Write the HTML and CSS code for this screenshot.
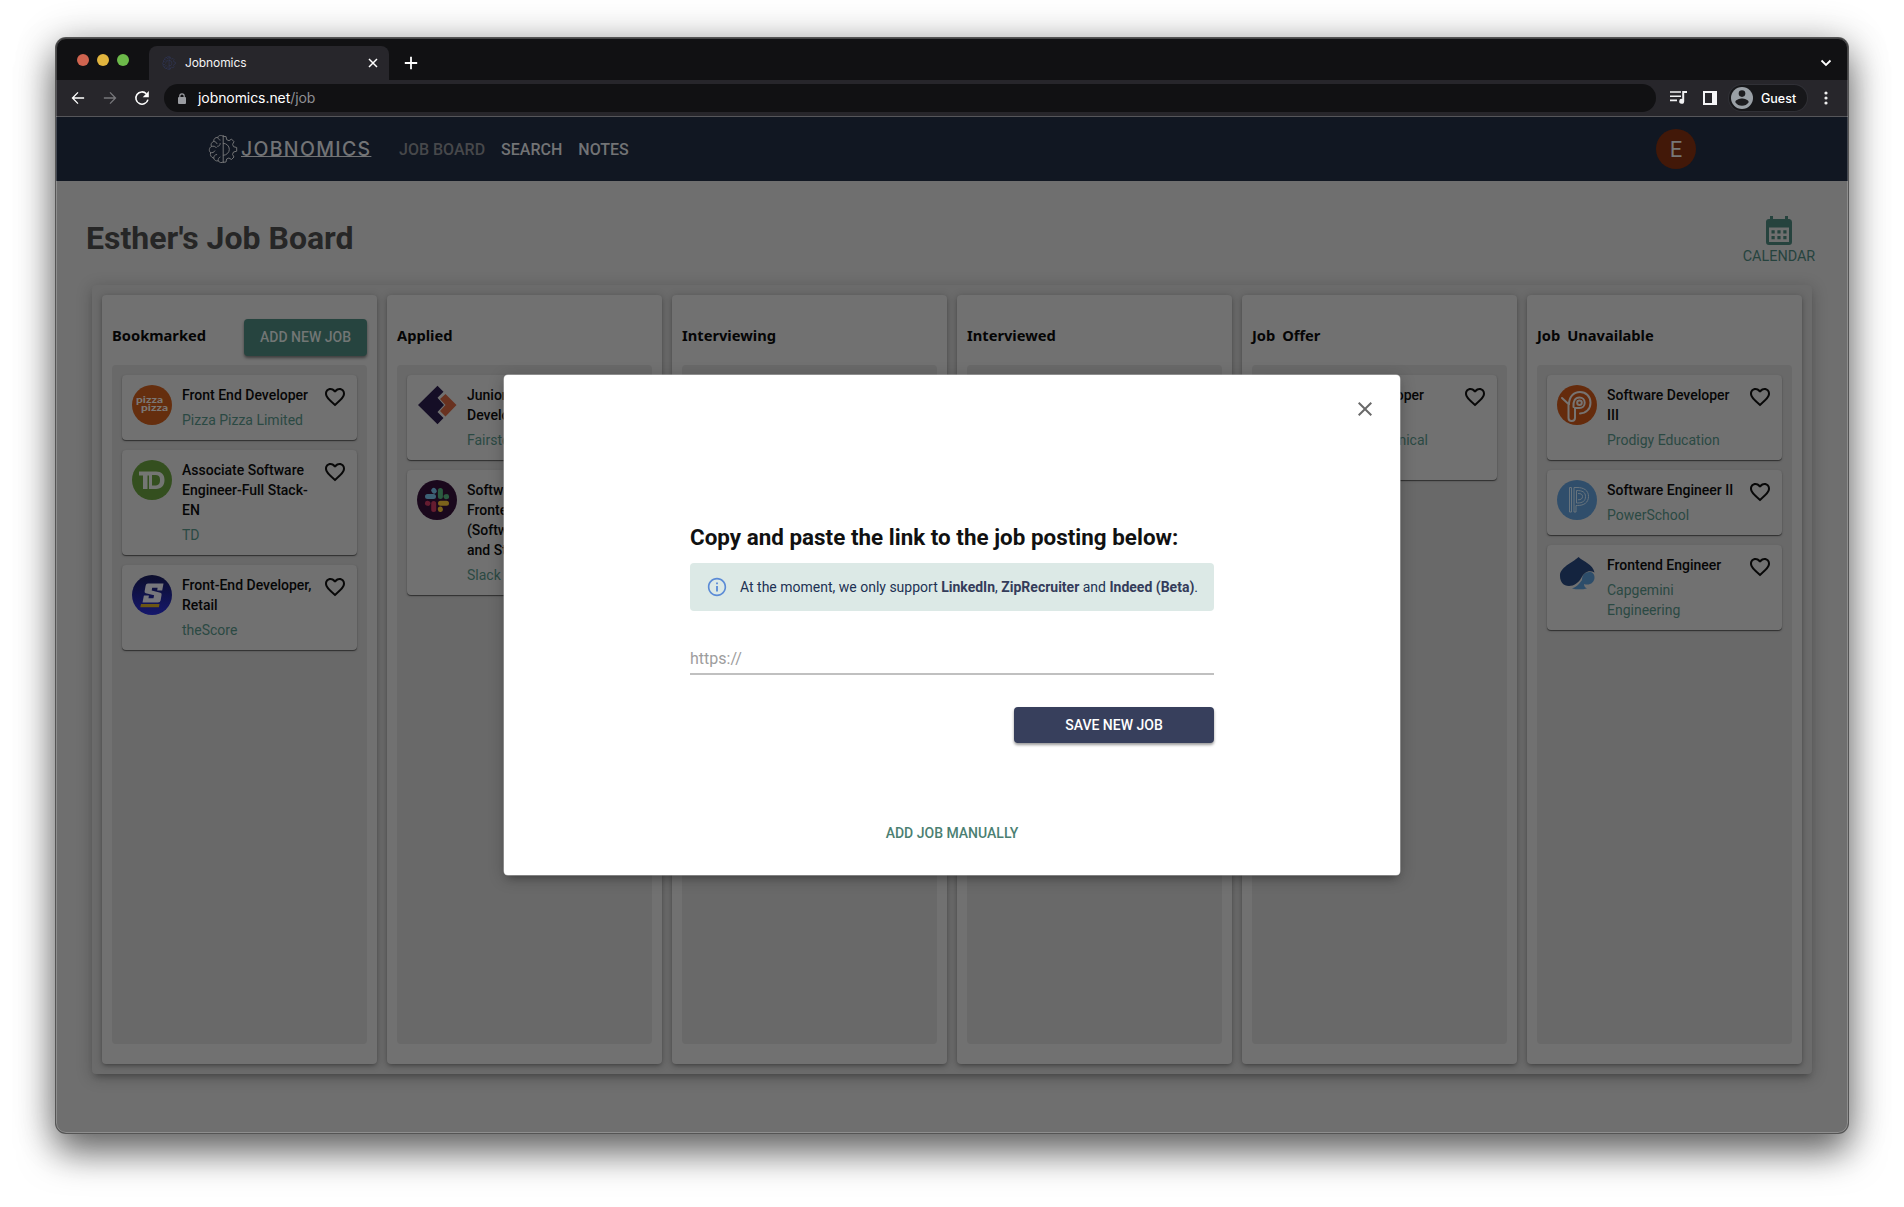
FILE: index.html
```html
<!DOCTYPE html>
<html lang="en">
<head>
<meta charset="utf-8">
<title>Jobnomics</title>
<link rel="stylesheet" href="styles.css">
</head>
<body>
<svg width="0" height="0" class="defs">
  <symbol id="heart" viewBox="0 0 24 24"><path d="M16.5 3c-1.74 0-3.41.81-4.5 2.09C10.91 3.81 9.24 3 7.5 3 4.42 3 2 5.42 2 8.5c0 3.78 3.4 6.86 8.55 11.54L12 21.35l1.45-1.32C18.6 15.36 22 12.28 22 8.5 22 5.42 19.58 3 16.5 3zm-4.4 15.55-.1.1-.1-.1C7.14 14.24 4 11.39 4 8.5 4 6.5 5.5 5 7.5 5c1.54 0 3.04.99 3.57 2.36h1.87C13.46 5.99 14.96 5 16.5 5c2 0 3.5 1.5 3.5 3.5 0 2.89-3.14 5.74-7.9 10.05z"/></symbol>
  <symbol id="brain" viewBox="0 0 30 30"><g fill="none" stroke="currentColor" stroke-width="1" stroke-linejoin="round" stroke-linecap="round"><path d="M15.2 1.5v27M15 2.2c-2-1.500-4.600-.8-5.200 1.200-2.600-.2-4.400 1.600-4 4C3.500 8.200 2.500 10.400 3.400 12.400 1 13.800.6 17 2.600 18.700 1.800 21.200 3.200 23.600 5.600 24c.6 2.300 2.600 3.400 4.600 2.800 1.200 2 3.600 2.400 4.900 1.200"/><path d="M6 7.500c1.500.1 2.600.9 3 2.200M9.800 3.500c.2 1.300 1 2.200 2.300 2.500M12.200 9.500c0 1.500-.8 2.700-2.600 2.800M3.500 12.500c2-.8 3.900-.3 4.800 1.200M2.700 18.600c1.700.5 3.300-.1 4.100-1.700M5.700 24c0-2 1.100-3.300 3-3.500M10.200 26.600c-.2-1.600.4-2.800 1.800-3.500"/><path d="M15.300 9.300a6 6 0 0 1 0 12M15.300 2.400l2.800.2.500 3 2.400 1.100 2.500-1.600 2.500 2.600-1.400 2.600.9 2.400 3.200.8v3.700l-3.200.8-1 2.400 1.500 2.600-2.500 2.500-2.600-1.500-2.300 1-.6 3-2.600.3"/></g></symbol>
</svg>
<div class="window">
  <div class="tabstrip">
    <div class="lights"><i class="red"></i><i class="amber"></i><i class="green"></i></div>
    <div class="tab">
      <svg class="favicon" width="14" height="14"><use href="#brain"/></svg>
      <span class="tab-title">Jobnomics</span>
      <svg width="10" height="10" viewBox="0 0 10 10" stroke="#fff" stroke-width="1.500"><path d="M1 1l8 8M9 1L1 9"/></svg>
    </div>
    <svg class="plus" width="14" height="14" viewBox="0 0 14 14" stroke="#fff" stroke-width="1.800"><path d="M7 .8v12.400M.8 7h12.400"/></svg>
    <svg class="chevron" width="12" height="8" viewBox="0 0 12 8" fill="none" stroke="#fff" stroke-width="1.800"><path d="M1.500 1.500L6 6l4.500-4.500"/></svg>
  </div>
  <div class="toolbar">
    <svg class="tool" viewBox="0 0 16 16" fill="none" stroke="#fff" stroke-width="1.500"><path d="M15 8H2M8 1.600L1.700 8 8 14.400"/></svg>
    <svg class="tool" viewBox="0 0 16 16" fill="none" stroke="#77777b" stroke-width="1.500"><path d="M1 8h13M8 1.600L14.300 8 8 14.400"/></svg>
    <svg class="tool" viewBox="0 0 16 16" fill="none" stroke="#fff" stroke-width="1.800"><path d="M14.800 9.800A7 7 0 1 1 13 3.100"/><path d="M15.800 0v7H8.800z" fill="#fff" stroke="none"/></svg>
    <div class="omnibox">
      <svg width="8" height="11" viewBox="0 0 8 11"><rect y="4" width="8" height="7" rx="1" fill="#9a9ca1"/><path d="M1.800 4.500V3a2.200 2.200 0 0 1 4.400 0v1.500" fill="none" stroke="#9a9ca1" stroke-width="1.200"/></svg>
      <span class="url">jobnomics.net<span>/job</span></span>
    </div>
    <svg class="media" width="17" height="14" viewBox="0 0 17 14"><path d="M0 1h11M0 5.200h11M0 9.400h7" stroke="#f1f1f3" stroke-width="1.600"/><path d="M12.200 0H17v2h-2.800v8.300a2.500 2.500 0 1 1-2-2.400z" fill="#f1f1f3"/></svg>
    <svg class="panel" width="14" height="14" viewBox="0 0 14 14"><path d="M0 0h14v14H0zM2 2v10h7V2z" fill="#f5f5f7" fill-rule="evenodd"/></svg>
    <div class="guest">
      <svg width="22" height="22" viewBox="0 0 22 22"><circle cx="11" cy="11" r="11" fill="#9aa0a6"/><circle cx="11" cy="6.600" r="3.300" fill="#1d1d20"/><path d="M4.300 15.200c0-2.400 4.500-3.600 6.700-3.600s6.700 1.200 6.700 3.600c-1.600 2.300-4 3.600-6.700 3.600s-5.100-1.300-6.700-3.600z" fill="#1d1d20"/></svg>
      <span>Guest</span>
    </div>
    <svg class="dots" width="4" height="14" viewBox="0 0 4 14" fill="#eee"><circle cx="2" cy="2" r="1.600"/><circle cx="2" cy="7" r="1.600"/><circle cx="2" cy="12" r="1.600"/></svg>
  </div>

  <nav class="nav">
    <svg class="brand-icon" width="30" height="30"><use href="#brain"/></svg>
    <span class="brand">JOBNOMICS</span>
    <a class="active">JOB BOARD</a><a>SEARCH</a><a>NOTES</a>
    <span class="avatar">E</span>
  </nav>

  <main class="page">
    <header class="head">
      <h1>Esther's Job Board</h1>
      <div class="calendar">
        <svg width="32" height="30" viewBox="0 0 32 30"><path fill-rule="evenodd" d="M7 0h3v3h12V0h3v3h1.500a3 3 0 0 1 2.500 3v20a3 3 0 0 1-3 3H6a3 3 0 0 1-3-3V6a3 3 0 0 1 3-3h1zM6 11.500V26h20V11.500z"/><path d="M8.500 14.200h3.200v3.200H8.500zM14.400 14.200h3.200v3.200h-3.200zM20.300 14.200h3.200v3.200h-3.200zM8.500 20h3.200v3.200H8.500zM14.400 20h3.200v3.200h-3.200zM20.300 20h3.200v3.200h-3.200z"/></svg>
        <span>CALENDAR</span>
      </div>
    </header>
    <section class="board">
      <div class="column">
        <div class="column-head"><h2>Bookmarked</h2><button class="add">ADD NEW JOB</button></div>
        <div class="list">
          <article class="card">
            <svg class="logo" viewBox="0 0 40 40"><circle cx="20" cy="20" r="20" fill="#652e0e"/><text class="pizza"><tspan x="4" y="17.500" textLength="27" lengthAdjust="spacingAndGlyphs">pizza</tspan><tspan x="9" y="25.500" textLength="27" lengthAdjust="spacingAndGlyphs">pizza</tspan></text></svg>
            <div class="info"><h3>Front End Developer</h3><p>Pizza Pizza Limited</p></div>
            <svg class="heart"><use href="#heart"/></svg>
          </article>
          <article class="card">
            <svg class="logo" viewBox="0 0 40 40"><circle cx="20" cy="20" r="20" fill="#344f1f"/><path fill="#747673" fill-rule="evenodd" d="M7 11.500h17c5.500 0 8.500 3 8.500 8.500s-3 9-8.500 9h-8.500V15.500H15V29h-4V15.500H7zM20 15v10.500h2.500c4 0 5.500-1.700 5.500-5.500s-1.500-5-5.500-5z"/><path d="M16.500 15.500V29" stroke="#344f1f"/></svg>
            <div class="info"><h3>Associate Software<br>Engineer-Full Stack-<br>EN</h3><p>TD</p></div>
            <svg class="heart"><use href="#heart"/></svg>
          </article>
          <article class="card">
            <svg class="logo" viewBox="0 0 40 40"><defs><linearGradient id="score" x2="0" y2="1"><stop stop-color="#0c0e2c"/><stop offset="1" stop-color="#15176c"/></linearGradient></defs><circle cx="20" cy="20" r="20" fill="url(#score)"/><path fill="#77777c" d="M16 8.500h15.500l-1.300 7h-5l.4-2.700h-5.400l-.5 2.700 8.700 2.200q1.500.5 1.200 2l-1 5.800q-.4 2-2.600 2H10.500l1.400-7h5l-.4 2.800h5l.6-3-8.300-2q-1.500-.4-1.200-2l1-5.600q.4-2.200 2.400-2.200z"/><path fill="#6c5614" d="M9 29h18.500l-.6 3.300H8.300z"/></svg>
            <div class="info"><h3>Front-End Developer,<br>Retail</h3><p>theScore</p></div>
            <svg class="heart"><use href="#heart"/></svg>
          </article>
        </div>
      </div>
      <div class="column">
        <div class="column-head"><h2>Applied</h2></div>
        <div class="list">
          <article class="card">
            <svg class="logo" viewBox="0 0 40 40"><path fill="#150e26" d="M20.500.8l6 6-6 6 6.500 7.200-6.500 7 6 6-6 6.200L1 20z"/><path fill="#693220" d="M28.500 9L39.500 20 28.500 31.500 23 26l5.500-6-5.500-6z"/></svg>
            <div class="info"><h3>Junior Frontend<br>Developer</h3><p>Fairstone</p></div>
            <svg class="heart"><use href="#heart"/></svg>
          </article>
          <article class="card">
            <svg class="logo" viewBox="0 0 40 40"><circle cx="20" cy="20" r="20" fill="#1a081c"/><g stroke-width="5" stroke-linecap="round"><path stroke="#3c6175" d="M10.500 16.600h6M16.700 10.400v0l.6.700"/><path stroke="#2b5a40" d="M23.400 10.500v6M29.600 16.600v0l-.6.100"/><path stroke="#7c621c" d="M29.500 23.300h-6M23.400 29.500v0l-.1-.6"/><path stroke="#651c30" d="M16.700 29.500v-6M10.400 23.300v0l.6.100"/></g></svg>
            <div class="info"><h3>Software Engineer,<br>Frontend<br>(Software Design<br>and Strategy)</h3><p>Slack</p></div>
            <svg class="heart"><use href="#heart"/></svg>
          </article>
        </div>
      </div>
      <div class="column"><div class="column-head"><h2>Interviewing</h2></div><div class="list"></div></div>
      <div class="column"><div class="column-head"><h2>Interviewed</h2></div><div class="list"></div></div>
      <div class="column">
        <div class="column-head"><h2>Job Offer</h2></div>
        <div class="list">
          <article class="card">
            <span class="logo"></span>
            <div class="info"><h3>React Developer<br>II</h3><p>Lumi Mechanical<br>Group</p></div>
            <svg class="heart"><use href="#heart"/></svg>
          </article>
        </div>
      </div>
      <div class="column">
        <div class="column-head"><h2>Job Unavailable</h2></div>
        <div class="list">
          <article class="card">
            <svg class="logo" viewBox="0 0 40 40"><circle cx="20" cy="20" r="20" fill="#652b0c"/><g fill="none" stroke="#777472" stroke-width="2" stroke-linecap="round" stroke-linejoin="round"><path d="M5 13l7 6.500M11.500 20v13q0 3 3.200 3t3.300-3v-9.500M12 19.500c0-7.500 4.500-12.500 11-12.500 6 0 10.500 4.500 10.500 10.700 0 6.300-4.500 10.700-10.500 10.700"/><path d="M16.500 22c-.5-6 1.500-9.500 6-9.500 3 0 5.200 2.200 5.200 5.200s-2.200 5.300-5.200 5.300H18"/><circle cx="22.500" cy="17.700" r="2.300"/></g></svg>
            <div class="info"><h3>Software Developer<br>III</h3><p>Prodigy Education</p></div>
            <svg class="heart"><use href="#heart"/></svg>
          </article>
          <article class="card">
            <svg class="logo" viewBox="0 0 40 40"><circle cx="20" cy="20" r="20" fill="#304e6b"/><path fill="none" stroke="#68747d" stroke-width="1" d="M12.500 7.500v24.500h2V7.500zM17 7.500h3c7 0 11.500 3 11.500 9s-4.500 9-11 9H19V32h-2zM19.500 10.500v12.500h1c5 0 8-2 8-6.400s-3-6.100-9-6.100zM21 13.500c3 0 4.500.8 4.500 3s-1.500 3.300-4.500 3.300"/></svg>
            <div class="info"><h3>Software Engineer II</h3><p>PowerSchool</p></div>
            <svg class="heart"><use href="#heart"/></svg>
          </article>
          <article class="card">
            <svg class="logo" viewBox="0 0 40 40"><path fill="#2d4d6a" d="M25 25c0-5 3-8 7.500-8 3 0 5 2 5 5.500 0 5-5 8.500-10.500 6.500 0 2 1 3.500 3 4.500-4 1-10 1.300-15 0 4-1.500 7-4 10-8.500z"/><path fill="#14243f" d="M21.500 2c5 4.500 14.500 7.500 16 15.500-5.500-3-10.500 0-13 5C21.500 28 17 31 12 31 6.500 31 3 27 3 21 3 12 14.500 8.500 21.500 2z"/></svg>
            <div class="info"><h3>Frontend Engineer</h3><p>Capgemini<br>Engineering</p></div>
            <svg class="heart"><use href="#heart"/></svg>
          </article>
        </div>
      </div>
    </section>
  </main>

  <div class="modal">
    <svg class="close" width="24" height="24" viewBox="0 0 24 24"><path d="M19 6.410 17.590 5 12 10.590 6.410 5 5 6.410 10.590 12 5 17.590 6.410 19 12 13.410 17.590 19 19 17.590 13.410 12z"/></svg>
    <div class="form">
      <h2>Copy and paste the link to the job posting below:</h2>
      <div class="alert">
        <svg width="22" height="22" viewBox="0 0 24 24"><path d="M11 7h2v2h-2zM11 11h2v6h-2zM12 2C6.480 2 2 6.480 2 12s4.480 10 10 10 10-4.480 10-10S17.520 2 12 2zm0 18.200c-4.500 0-8.200-3.700-8.200-8.200S7.500 3.800 12 3.800s8.200 3.700 8.200 8.200-3.700 8.200-8.200 8.200z"/></svg>
        <span>At the moment, we only support <b>LinkedIn</b>, <b>ZipRecruiter</b> and <b>Indeed (Beta)</b>.</span>
      </div>
      <div class="field">https://</div>
      <button class="save">SAVE NEW JOB</button>
    </div>
    <button class="manual">ADD JOB MANUALLY</button>
  </div>
</div>
</body>
</html>
```
FILE: styles.css
```css
* { box-sizing: border-box; }
body { margin: 0; height: 1207px; padding: 38px 56px 0; background: #fff; overflow: hidden; font-family: Roboto, "Liberation Sans", sans-serif; }
.defs { position: absolute; }
h1, h2, h3, p { margin: 0; }
svg { flex: none; display: block; }
button { border: 0; padding: 0; font: inherit; }

.window { position: relative; width: 1792px; height: 1095px; border-radius: 10px; overflow: hidden; background: #6f6f6f; display: flex; flex-direction: column; box-shadow: 0 0 0 1px #555, 0 20px 36px rgba(0,0,0,.5), 0 4px 40px rgba(0,0,0,.3); }
.window::after { content: ""; position: absolute; inset: 0; border-radius: 10px; border: 1px solid rgba(255,255,255,.22); pointer-events: none; }

.tabstrip { height: 42px; flex: none; background: #111113; display: flex; align-items: flex-start; padding-left: 21px; font-family: Inter, sans-serif; }
.lights { display: flex; gap: 8px; margin: 15.500px 20px 0 0; }
.lights i { width: 12px; height: 12px; border-radius: 50%; }
.red { background: #d0644f; } .amber { background: #e2b53e; } .green { background: #6dba4a; }
.tab { width: 240px; height: 34px; margin-top: 8px; background: #27262b; border-radius: 8px 8px 0 0; display: flex; align-items: center; padding: 0 11px 0 13px; color: #f4f4f5; font-size: 12px; }
.favicon { color: #363e68; margin-right: 9px; }
.tab-title { flex: 1; margin-top: -2px; letter-spacing: -.1px; }
.plus { margin: 18px 0 0 15px; }
.chevron { margin: 21px 16px 0 auto; }

.toolbar { height: 37px; flex: none; background: #27262b; border-bottom: 1px solid #56565a; display: flex; align-items: center; padding: 0 20px 0 15px; font-family: Inter, sans-serif; }
.tool { width: 14px; height: 14px; margin-right: 18px; overflow: visible; }
.omnibox { width: 1492px; height: 28px; margin-left: -3px; border-radius: 14px; background: #111113; display: flex; align-items: center; padding-left: 14px; gap: 12px; }
.url { color: #fff; font-size: 14px; letter-spacing: -.07px; margin-top: -1px; }
.url span { color: #8f8f93; }
.media { margin-left: 14px; }
.panel { margin-left: 16px; }
.guest { margin-left: 12px; width: 78px; height: 26px; border-radius: 13px; background: #17171a; display: flex; align-items: center; gap: 8px; padding-left: 2px; color: #fff; font-size: 12.500px; font-weight: 500; box-shadow: 0 0 0 1px #303036; }
.dots { margin-left: auto; }

.nav { height: 64px; flex: none; background: #111722; display: flex; align-items: center; padding-left: 152px; color: #727375; font-size: 16px; font-weight: 500; }
.brand { margin: 0 29px 0 3px; width: 129px; font: 500 19.500px/24px Inter, sans-serif; letter-spacing: 1.300px; text-decoration: underline; text-decoration-thickness: 1px; text-underline-offset: 0; text-decoration-skip-ink: none; white-space: nowrap; }
.brand-icon { color: #727375; }
.nav a { margin-right: 16px; }
.nav .active { color: #47484b; }
.avatar { width: 40px; height: 40px; margin: 0 152px 0 auto; border-radius: 50%; background: #421808; color: #777; display: grid; place-items: center; font-size: 22px; font-weight: 400; }

.page { padding: 35px 30px 0; }
.head { display: flex; justify-content: space-between; height: 69px; }
h1 { font-size: 32px; line-height: 44px; font-weight: 700; color: #262626; }
.calendar { display: flex; flex-direction: column; align-items: center; width: 80px; margin-right: -1px; color: #26433e; fill: #26433e; font-size: 14.400px; line-height: 22px; }
.board { margin: 0 6px; height: 789px; padding: 10px; display: grid; grid-template-columns: repeat(6, 275px); gap: 10px; border-radius: 4px; background: #6b6b6b; box-shadow: 0 5px 6px -3px rgba(0,0,0,.28), 0 3px 16px 1px rgba(0,0,0,.2); }
.column { padding: 10px 10px 20px; border-radius: 4px; background: #717171; display: flex; flex-direction: column; box-shadow: 0 2px 4px -1px rgba(0,0,0,.35), 0 1px 8px rgba(0,0,0,.18); }
.column-head { height: 60px; display: flex; justify-content: space-between; align-items: flex-start; }
.column-head h2 { margin-top: 19px; font: 700 14.700px/22px "Noto Sans", sans-serif; word-spacing: 3px; color: #050505; }
.add { margin-top: 14px; width: 123px; height: 36.500px; border-radius: 4px; background: #26443f; color: #727675; font-size: 14px; font-weight: 500; box-shadow: 0 2px 3px rgba(0,0,0,.45); }
.list { flex: 1; padding: 10px; display: flex; flex-direction: column; gap: 10px; border-radius: 4px; background: #696969; }
.card { padding: 10px; display: flex; border-radius: 4px; background: #717171; box-shadow: 0 1px 1px rgba(0,0,0,.5), 0 1px 3px rgba(0,0,0,.12); font-size: 14px; line-height: 20px; }
.logo { width: 40px; height: 40px; margin-right: 10px; flex: none; }
.info { flex: 1; white-space: nowrap; }
.info h3 { font-size: 14px; line-height: 20px; font-weight: 500; color: #060606; }
.info p { margin-top: 5px; color: #2b4943; }
.heart { width: 24px; height: 24px; fill: #080808; }
.pizza { font: 900 10px Lato, sans-serif; fill: #7b7774; }

.modal { position: absolute; left: 448px; top: 337px; width: 896px; height: 500px; border-radius: 4px; background: #fff; display: flex; flex-direction: column; align-items: center; box-shadow: 0 0 0 .5px #bbb, 0 6px 8px -4px rgba(0,0,0,.3), 0 3px 16px 1px rgba(0,0,0,.2); }
.close { align-self: flex-end; margin: 22px 23px 0 0; fill: #696969; }
.form { width: 524px; margin-top: 101px; display: flex; flex-direction: column; }
.form h2 { font-size: 22.400px; line-height: 30px; font-weight: 700; color: #111; white-space: nowrap; letter-spacing: .02px; }
.alert { margin-top: 11px; height: 48px; border-radius: 4px; background: #dce9e6; display: flex; align-items: center; padding-left: 16px; gap: 12px; color: #1d3254; font-size: 14px; white-space: nowrap; }
.alert svg { fill: #5b8bd6; }
.alert b { color: #343c5a; font-weight: 700; }
.field { margin-top: 32px; height: 32px; line-height: 31px; border-bottom: 2px solid #c0c0c0; color: #9d9d9d; font-size: 16px; }
.save { align-self: flex-end; margin-top: 31.500px; width: 200px; height: 36.500px; border-radius: 4px; background: #373f5c; color: #fff; font-size: 14px; font-weight: 500; box-shadow: 0 2px 3px rgba(0,0,0,.4); }
.manual { margin-top: 80px; background: none; color: #4b7f72; font-size: 14px; font-weight: 500; line-height: 20px; }
```
